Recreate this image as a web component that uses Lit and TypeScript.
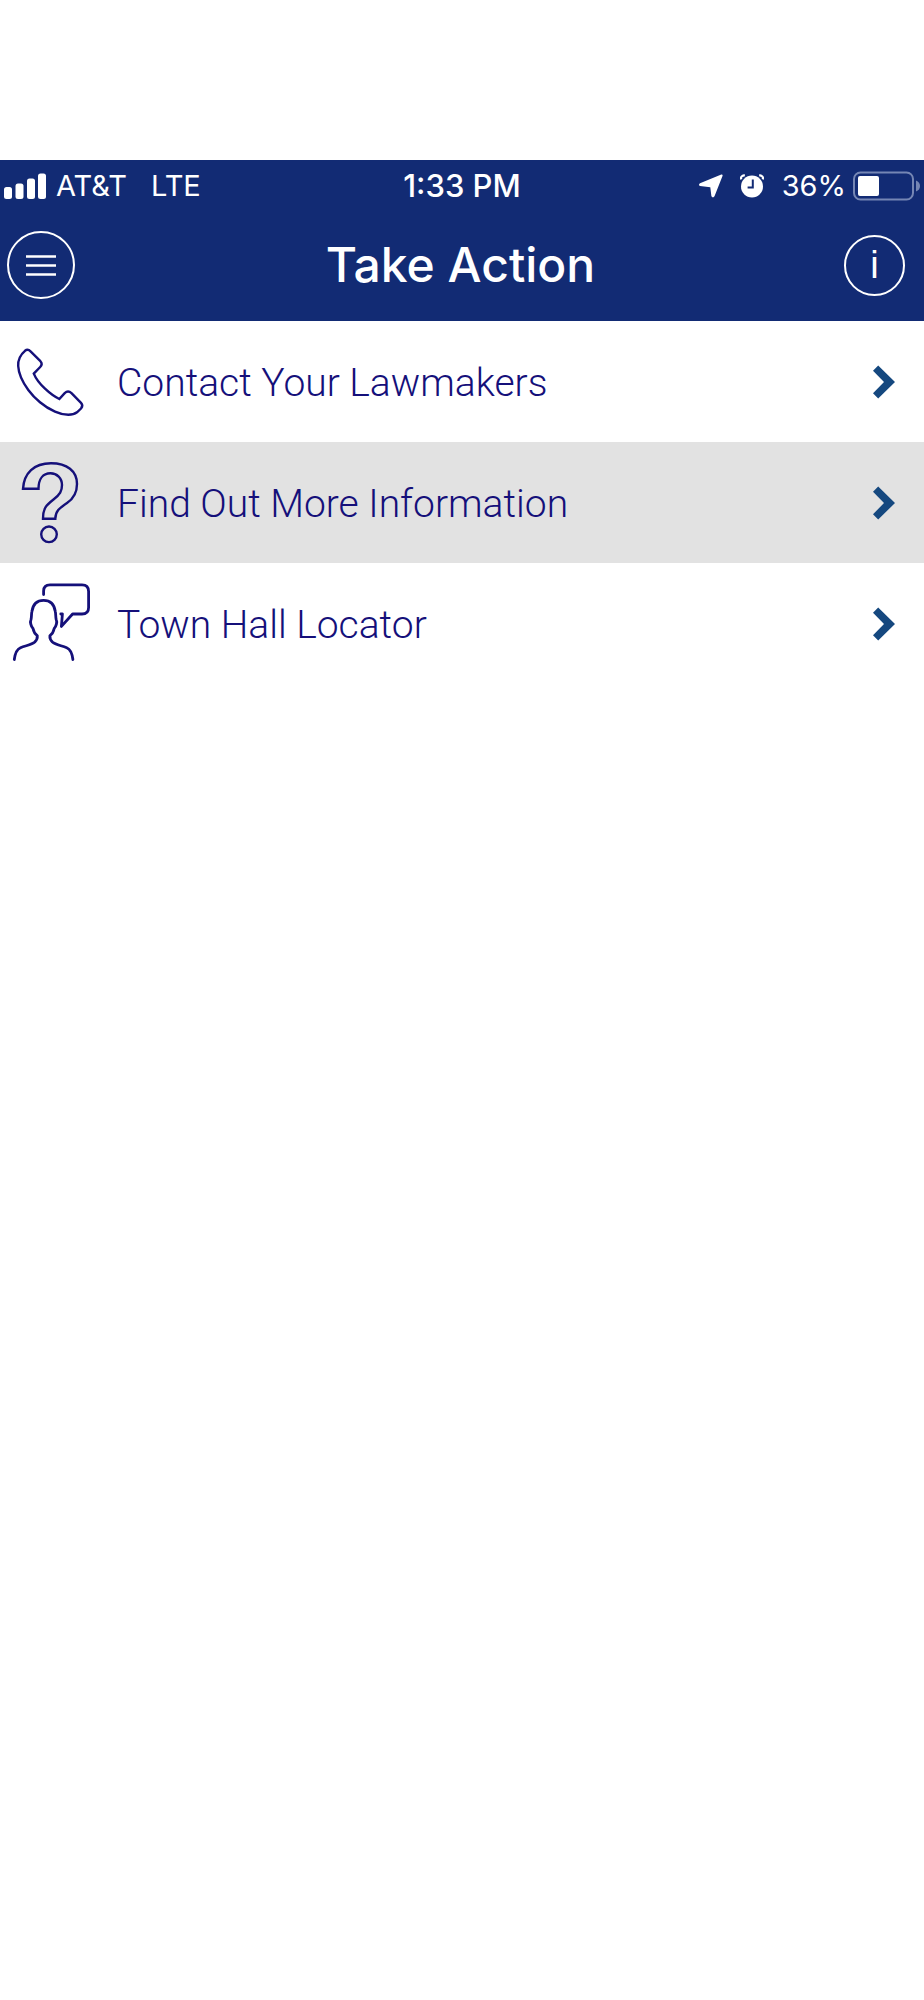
import { LitElement, html, css, svg } from "lit";
import { customElement, state } from "lit/decorators.js";

interface ActionItem {
  label: string;
  icon: unknown;
}

const phoneIcon = svg`
  <path stroke-width="2.4" d="M25 29.8C20 34 17.8 38 18.2 45C18.6 53 22.5 61 28.3 69C32 74 36 78 40 81.3C45 85.5 50 88.5 55 90.7C60 93 64 93.8 68.3 93.8C72.5 93.8 75 92.8 77 91.3L81 87.5Q83.5 84.5 81 81.8L71.5 72.2Q68 69 64.7 72.2L59.3 78C51 74 38 63 33.8 52.6L40.2 46Q43 43 40.4 40.2L30.8 30.6Q27.8 27.6 25 29.8Z"/>`;

const questionIcon = svg`
  <path stroke-width="2.4" d="M23 46.8C24 31 34 21.3 51 21.3C67 21.3 77 29 77 42C77 52 73 57 67 61C59 66.5 55.5 69 55.3 76.7H43C43 66 46.5 63 53.5 57.5C60 52.5 62 49 62 43C62 36 57 31.3 50.5 31.3C43 31.3 38.5 37 38.5 46.8Z"/>
  <circle stroke-width="2.4" cx="49" cy="92.3" r="7.8"/>`;

const speakerIcon = svg`
  <g stroke-width="2.8" stroke-linecap="round" stroke-linejoin="round">
    <path d="M43.6 31.5V28Q43.6 21.8 50 21.8H82Q88.6 21.8 88.6 28.4V44.5Q88.6 51 82 51H72.6L61.4 63.4L62.4 51H60.8"/>
    <path d="M14.3 96.5C15 91 16 86.5 20.5 84.7C26 82.5 32 81.6 34.8 79C37 76.8 37.6 75.5 37.3 72.6C34.8 71 33.6 68.5 33 65.5C31 63.5 29.8 59 31 56.5C31.7 54 31.3 51 31.9 48.5C33 41 37.6 37.4 43.6 37.4C49.6 37.4 54.2 41 55.3 48.5C55.9 51 55.5 54 56.2 56.5C57.4 59 56.2 63.5 54.2 65.5C53.6 68.5 52.4 71 49.9 72.6C49.6 75.5 50.2 76.8 52.4 79C55.2 81.6 61.2 82.5 66.7 84.7C71.2 86.5 72.2 91 72.9 96.5"/>
  </g>`;

@customElement("status-bar")
class StatusBar extends LitElement {
  static styles = css`
    :host {
      display: grid;
      grid-template-columns: 1fr auto 1fr;
      align-items: center;
      height: 52px;
      padding: 0 4px;
      color: #fff;
      font: 400 29px/36px Inter, "Liberation Sans", sans-serif;
    }
    .side {
      display: flex;
      align-items: center;
    }
    .carrier {
      margin: 0 24px 0 10px;
    }
    .time {
      font-size: 31px;
      font-weight: 500;
    }
    .end {
      justify-content: flex-end;
    }
    .alarm {
      margin: 0 18px 0 17px;
    }
    .battery {
      margin-left: 7px;
    }
  `;

  render() {
    return html`
      <div class="side">
        <svg width="42" height="26" viewBox="0 0 42 26" fill="currentColor" aria-hidden="true">
          <rect x="0" y="14" width="8" height="12" rx="2.5" />
          <rect x="11.5" y="10.5" width="8" height="15.5" rx="2.5" />
          <rect x="23" y="5.5" width="8" height="20.5" rx="2.5" />
          <rect x="34" y="0.5" width="8" height="25.5" rx="2.5" />
        </svg>
        <span class="carrier">AT&amp;T</span>
        <span>LTE</span>
      </div>
      <span class="time">1:33 PM</span>
      <div class="side end">
        <svg width="24" height="24" viewBox="0 0 24 24" fill="currentColor" aria-hidden="true">
          <path d="M22.3 0.6Q24 0.2 23.5 1.9L15.5 22.3Q14 24.6 12.4 22.3L11.3 13.2L1 12Q-1 10.8 1 9.2Z" />
        </svg>
        <svg class="alarm" width="24" height="24" viewBox="0 0 24 24" aria-hidden="true">
          <circle cx="12" cy="12.5" r="11" fill="currentColor" />
          <path d="M1.3 5.4Q0 2 4.8 1.2M22.7 5.4Q24 2 19.2 1.2" fill="none" stroke="currentColor" stroke-width="2.2" />
          <path d="M12.8 5.5V13.5H7.6" fill="none" stroke="#122b74" stroke-width="2" />
        </svg>
        <span>36%</span>
        <svg class="battery" width="67" height="30" viewBox="0 0 67 30" aria-hidden="true">
          <rect x="1" y="1.5" width="59" height="27" rx="6.5" fill="none" stroke="#7586b4" stroke-width="2" />
          <rect x="5" y="5" width="21" height="20" rx="2" fill="currentColor" />
          <path d="M63 9.5Q67 11 67 15T63 20.5Z" fill="#7586b4" />
        </svg>
      </div>
    `;
  }
}

@customElement("app-root")
class AppRoot extends LitElement {
  static styles = css`
    :host {
      display: block;
      min-height: 100vh;
      box-sizing: border-box;
      padding-top: 160px;
      background: #fff;
      font-family: Inter, "Liberation Sans", sans-serif;
    }
    .header {
      background: #122b74;
      color: #fff;
      padding-bottom: 3px;
    }
    .nav {
      display: grid;
      grid-template-columns: 1fr auto 1fr;
      align-items: center;
      height: 106px;
      padding: 0 10px 0 7px;
    }
    .title {
      margin: 0;
      font-size: 48px;
      line-height: 58px;
      font-weight: 500;
    }
    .round {
      display: flex;
      align-items: center;
      justify-content: center;
      box-sizing: border-box;
      padding: 0;
      border: 2px solid #fff;
      border-radius: 50%;
      background: none;
      color: inherit;
    }
    .menu {
      width: 68px;
      height: 68px;
    }
    .info {
      justify-self: end;
      margin-right: 9px;
      width: 61px;
      height: 61px;
      font: 400 38px/40px "Liberation Sans", sans-serif;
    }
    .list {
      margin: 0;
      padding: 0;
      list-style: none;
    }
    .row {
      display: flex;
      align-items: center;
      height: 121px;
      padding-right: 29px;
      color: #15107a;
      text-decoration: none;
      font-family: Roboto, "Liberation Sans", sans-serif;
      font-size: 39px;
      line-height: 48px;
      font-weight: 300;
    }
    .row.selected {
      background: #e2e2e2;
    }
    .icon {
      flex: none;
      margin-right: 21px;
      fill: none;
      stroke: currentColor;
    }
    .label {
      flex: 1;
      padding-top: 2px;
    }
    .chevron {
      flex: none;
      fill: #15487f;
    }
  `;

  @state() private selected = 1;

  private items: ActionItem[] = [
    { label: "Contact Your Lawmakers", icon: phoneIcon },
    { label: "Find Out More Information", icon: questionIcon },
    { label: "Town Hall Locator", icon: speakerIcon },
  ];

  private select(event: Event, index: number) {
    event.preventDefault();
    this.selected = index;
  }

  render() {
    return html`
      <header class="header">
        <status-bar></status-bar>
        <div class="nav">
          <button class="round menu" aria-label="Menu">
            <svg width="30" height="21" viewBox="0 0 30 21" stroke="currentColor" stroke-width="2.4" aria-hidden="true">
              <path d="M0 1.5H30M0 10.5H30M0 19.5H30" />
            </svg>
          </button>
          <h1 class="title">Take Action</h1>
          <button class="round info" aria-label="Information">i</button>
        </div>
      </header>
      <ul class="list">
        ${this.items.map(
          (item, index) => html`
            <li>
              <a
                class="row ${index === this.selected ? "selected" : ""}"
                href="#"
                @click=${(event: Event) => this.select(event, index)}
              >
                <svg class="icon" width="96" height="121" viewBox="0 0 96 121" aria-hidden="true">${item.icon}</svg>
                <span class="label">${item.label}</span>
                <svg class="chevron" width="22" height="34" viewBox="0 0 22 34" aria-hidden="true">
                  <path d="M5.2 0.5L22 17L5.2 33.5L0 28.3L11 17L0 5.7Z" />
                </svg>
              </a>
            </li>
          `
        )}
      </ul>
    `;
  }
}
